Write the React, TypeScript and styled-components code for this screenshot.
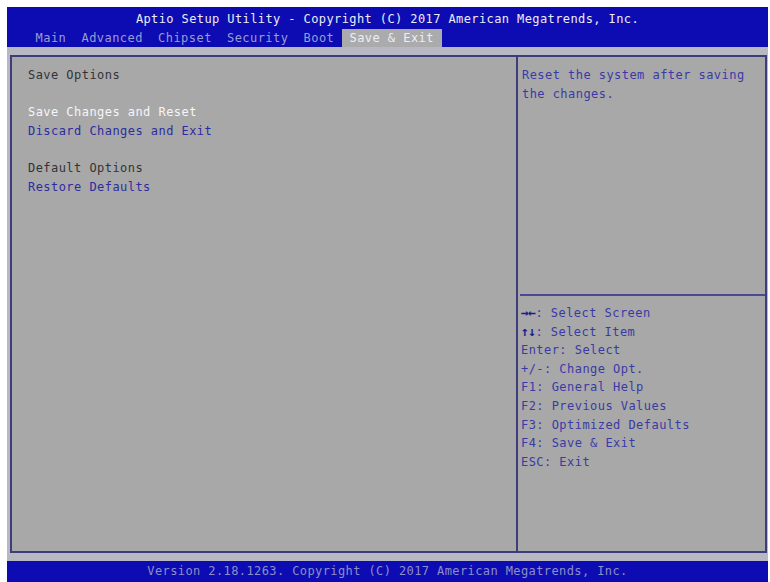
import React from "react";
import styled, { createGlobalStyle } from "styled-components";

const GlobalStyle = createGlobalStyle`
  html, body { margin: 0; padding: 0; background: #ffffff; }
  body { font-family: "DejaVu Sans Mono", "Liberation Mono", monospace; }
`;

const Screen = styled.div`
  margin: 7px 0 0 7px;
  width: 761px;
  height: 575px;
  display: flex;
  flex-direction: column;
  font-family: "DejaVu Sans Mono", "Liberation Mono", monospace;
  font-size: 12px;
  letter-spacing: 0.45px;
`;

const Header = styled.div`
  background: #0c0cb2;
  height: 40px;
  display: flex;
  flex-direction: column;
`;

const TitleRow = styled.div`
  height: 22px;
  display: flex;
  align-items: center;
  justify-content: center;
  color: #ececf4;
  letter-spacing: 0.4px;
  padding-top: 1px;
  box-sizing: border-box;
`;

const TabBar = styled.div`
  height: 18px;
  display: flex;
  padding-left: 21px;
`;

const Tab = styled.div<{ $active?: boolean }>`
  padding: 0 7.6px;
  line-height: 18px;
  white-space: pre;
  color: ${(p) => (p.$active ? "#eeeef2" : "#9c9cd2")};
  background: ${(p) => (p.$active ? "#ababad" : "transparent")};
`;

const Band = styled.div`
  flex: 1;
  display: flex;
  background: #b8b8c2;
  padding: 8px 1px 8px 3px;
  min-height: 0;
`;

const Frame = styled.div`
  flex: 1;
  display: grid;
  grid-template-columns: 504px 2px 1fr;
  border: 2px solid #3d3d7c;
  background: #a8a8a8;
`;

const LeftPane = styled.div`
  padding: 9px 0 0 16px;
`;

const Divider = styled.div`
  background: #3d3d7c;
`;

const RightPane = styled.div`
  display: grid;
  grid-template-rows: 237px 2px 1fr;
`;

const HelpTop = styled.div`
  padding: 9px 0 0 4px;
`;

const Separator = styled.div`
  margin-left: 2px;
  background: #4a4a94;
`;

const HelpList = styled.div`
  padding: 8px 0 0 3px;
`;

type Tone = "label" | "selected" | "item" | "help" | "key";

const toneColor: Record<Tone, string> = {
  label: "#333336",
  selected: "#f6f6f8",
  item: "#2c2ca0",
  help: "#3a3aa6",
  key: "#1c1c92",
};

const Line = styled.div<{ $tone?: Tone }>`
  height: 18.6px;
  line-height: 18.6px;
  white-space: pre;
  color: ${(p) => toneColor[p.$tone ?? "label"]};
`;

const Key = styled.span`
  color: ${toneColor.key};
  font-weight: bold;
  font-size: 13px;
  letter-spacing: -0.6px;
`;

const Footer = styled.div`
  height: 21px;
  line-height: 21px;
  background: #0c0cb2;
  color: #8e8ec8;
  text-align: center;
  letter-spacing: 0.4px;
`;

const tabs = ["Main", "Advanced", "Chipset", "Security", "Boot", "Save & Exit"];

const helpLines: [string, string][] = [
  ["→←", ": Select Screen"],
  ["↑↓", ": Select Item"],
  ["", "Enter: Select"],
  ["", "+/-: Change Opt."],
  ["", "F1: General Help"],
  ["", "F2: Previous Values"],
  ["", "F3: Optimized Defaults"],
  ["", "F4: Save & Exit"],
  ["", "ESC: Exit"],
];

export default function App() {
  return (
    <>
      <GlobalStyle />
      <Screen>
        <Header>
          <TitleRow>Aptio Setup Utility - Copyright (C) 2017 American Megatrends, Inc.</TitleRow>
          <TabBar>
            {tabs.map((t) => (
              <Tab key={t} $active={t === "Save & Exit"}>
                {t}
              </Tab>
            ))}
          </TabBar>
        </Header>
        <Band>
          <Frame>
            <LeftPane>
              <Line $tone="label">Save Options</Line>
              <Line> </Line>
              <Line $tone="selected">Save Changes and Reset</Line>
              <Line $tone="item">Discard Changes and Exit</Line>
              <Line> </Line>
              <Line $tone="label">Default Options</Line>
              <Line $tone="item">Restore Defaults</Line>
            </LeftPane>
            <Divider />
            <RightPane>
              <HelpTop>
                <Line $tone="help">Reset the system after saving</Line>
                <Line $tone="help">the changes.</Line>
              </HelpTop>
              <Separator />
              <HelpList>
                {helpLines.map(([k, rest]) => (
                  <Line key={k + rest} $tone="help">
                    {k && <Key>{k}</Key>}
                    {rest}
                  </Line>
                ))}
              </HelpList>
            </RightPane>
          </Frame>
        </Band>
        <Footer>Version 2.18.1263. Copyright (C) 2017 American Megatrends, Inc.</Footer>
      </Screen>
    </>
  );
}
